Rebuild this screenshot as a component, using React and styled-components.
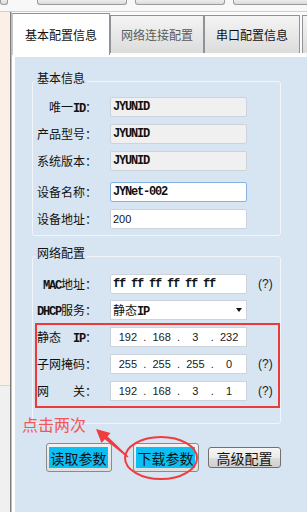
import React from 'react';
import styled, { createGlobalStyle } from 'styled-components';

const Global = createGlobalStyle`
  *, *::before, *::after { box-sizing: border-box; }
  html, body { margin: 0; padding: 0; background: #fff; }
  body { width: 307px; height: 512px; overflow: hidden; font-family: "Noto Sans CJK SC", sans-serif; }
`;

const CJK = '"Noto Sans CJK SC", "Liberation Sans", sans-serif';
const MONO = '"Liberation Mono", "DejaVu Sans Mono", monospace';

const Page = styled.div`
  position: relative;
  width: 307px;
  height: 512px;
  overflow: hidden;
  display: flex;
  flex-direction: column;
  background: #f7f7f7;
`;

const TopStrip = styled.div`
  flex: none;
  height: 12px;
  display: flex;
  align-items: flex-start;
  border-bottom: 1px solid #cfcfcf;
  background: #f8f8f8;
`;

const StubButton = styled.div`
  flex: none;
  width: ${p => p.$w}px;
  height: 5px;
  margin-left: ${p => p.$ml || 0}px;
  border: 1px solid #9c9c9c;
  border-top: none;
  border-radius: 0 0 3px 3px;
  background: linear-gradient(#ededed, #dadada);
`;

const Body = styled.div`
  flex: 1;
  display: flex;
  min-height: 0;
`;

const SideStrip = styled.div`
  flex: none;
  width: 10px;
  display: flex;
  flex-direction: column;
`;

const SideTop = styled.div`
  flex: 1;
  background: #fbf0e5;
`;

const SideBottom = styled.div`
  flex: none;
  height: 127px;
  background: #f0f0f0;
  border-top: 1px solid #d6d6d6;
`;

const SideLine = styled.div`
  flex: none;
  width: 2px;
  border-left: 1px solid #7e7e7e;
  background: #bdbdbd;
`;

const TabControl = styled.div`
  flex: 1;
  display: flex;
  flex-direction: column;
  background: #fbfbfb;
  min-width: 0;
`;

const TabBar = styled.div`
  flex: none;
  height: 43px;
  display: flex;
  align-items: flex-end;
`;

const Tab = styled.div`
  flex: none;
  width: ${p => p.$w}px;
  height: ${p => (p.$active ? 42 : 38)}px;
  margin-bottom: ${p => (p.$active ? 0 : 2)}px;
  margin-left: ${p => p.$ml || 0}px;
  border: 1px solid #8f9297;
  border-bottom: none;
  border-left-color: ${p => (p.$active ? '#c9c9c9' : '#8f9297')};
  background: ${p => (p.$active ? '#ffffff' : 'linear-gradient(#f4f4f4, #dcdcdc)')};
  display: flex;
  align-items: center;
  justify-content: center;
  font: 12px/14px ${CJK};
  color: ${p => p.$color || '#111'};
  white-space: nowrap;
  overflow: hidden;
`;

const TabPage = styled.div`
  flex: 1;
  display: flex;
  flex-direction: column;
  align-items: flex-start;
  background: #d7e4f2;
  border-top: 2px solid #ffffff;
  border-left: 3px solid #ffffff;
  padding-left: 17px;
`;

const Group = styled.fieldset`
  margin: ${p => p.$mt}px 0 0 0;
  width: 249px;
  min-inline-size: 0;
  padding: ${p => p.$pt}px 0 ${p => p.$pb}px 0;
  border: 1px solid #f2f6fb;
  border-radius: 3px;
  display: flex;
  flex-direction: column;
  gap: ${p => p.$gap}px;
`;

const Legend = styled.legend`
  margin-left: 2px;
  padding: 0 2px 6px;
  font: 12px/12px ${CJK};
  color: #111;
`;

const Row = styled.div`
  display: flex;
  align-items: center;
  height: 20px;
  margin-top: ${p => p.$mt || 0}px;
`;

const Label = styled.div`
  flex: none;
  width: ${p => p.$w || 64}px;
  display: flex;
  justify-content: ${p => (p.$split ? 'space-between' : 'flex-end')};
  align-items: baseline;
  font: 12px/20px ${CJK};
  color: #111;
  white-space: pre;
`;

const Latin = styled.span`
  font: bold 12px ${MONO};
  letter-spacing: -1.2px;
`;

const Field = styled.input`
  flex: none;
  margin: 0 0 0 13px;
  width: 137px;
  height: 20px;
  padding: 0 0 0 2px;
  border: 1px solid ${p => (p.$focus ? '#84b2e2' : '#ccd3db')};
  border-radius: 2px;
  background: ${p => (p.readOnly ? '#f0f0f0' : '#ffffff')};
  color: #111;
  font: ${p => (p.$sans ? '11px "Liberation Sans", sans-serif' : `bold 12px ${MONO}`)};
  letter-spacing: ${p => (p.$sans ? 0 : -1.2)}px;
  outline: none;
`;

const Select = styled.div`
  flex: none;
  margin-left: 13px;
  width: 137px;
  height: 20px;
  padding: 0 4px 0 2px;
  border: 1px solid #ccd3db;
  background: #ffffff;
  display: flex;
  align-items: center;
  justify-content: space-between;
  font: 12px/18px ${CJK};
  color: #111;
`;

const Caret = styled.span`
  width: 0;
  height: 0;
  border-left: 3.5px solid transparent;
  border-right: 3.5px solid transparent;
  border-top: 4px solid #111;
`;

const IpBox = styled.div`
  flex: none;
  margin-left: 13px;
  width: 137px;
  height: 20px;
  border: 1px solid #ccd3db;
  background: #ffffff;
  display: grid;
  grid-template-columns: 1fr 0 1fr 0 1fr 0 1fr;
  align-items: center;
  font: 11px/18px "Liberation Sans", sans-serif;
  color: #1a1a1a;
`;

const IpPart = styled.span`
  text-align: center;
`;

const IpDot = styled.span`
  display: flex;
  justify-content: center;
  overflow: visible;
  font-size: 11px;
`;

const Hint = styled.span`
  margin-left: 11px;
  font: 12px/20px "Liberation Sans", sans-serif;
  color: #222;
  white-space: nowrap;
`;

const RedBox = styled.div`
  margin: ${p => p.$mt || 0}px 0 0 2px;
  width: 245px;
  border: 2px solid #ec3a3a;
  padding: 2px 0 5px 0;
  display: flex;
  flex-direction: column;
  gap: 7px;
`;

const ButtonRow = styled.div`
  margin: 19px 0 0 14px;
  display: flex;
  align-items: center;
`;

const HiButton = styled.div`
  flex: none;
  margin-left: ${p => p.$ml || 0}px;
  width: 66px;
  height: 29px;
  padding: 3px 3px 3px 2px;
  border: 1px solid #8a8a8a;
  border-radius: 3px;
  background: linear-gradient(#f2f2f2, #dedede);
`;

const HiFace = styled.div`
  width: 100%;
  height: 100%;
  background: #0bbff2;
  display: flex;
  align-items: center;
  justify-content: center;
  font: 14px/16px ${CJK};
  color: #111;
`;

const PlainButton = styled.div`
  flex: none;
  margin-left: ${p => p.$ml || 0}px;
  width: 73px;
  height: 21px;
  border: 1px solid #707070;
  border-radius: 3px;
  background: linear-gradient(#f6f6f6 0%, #ebebeb 50%, #dddddd 51%, #cfcfcf 100%);
  display: flex;
  align-items: center;
  justify-content: center;
  font: 14px/16px ${CJK};
  color: #111;
`;

const Note = styled.div`
  position: absolute;
  left: 22px;
  top: 416px;
  font: 16px/16px ${CJK};
  color: #f25656;
  white-space: nowrap;
`;

const Overlay = styled.svg`
  position: absolute;
  left: 0;
  top: 0;
  pointer-events: none;
`;

function Ip({ parts }) {
  return (
    <IpBox>
      <IpPart>{parts[0]}</IpPart>
      <IpDot>.</IpDot>
      <IpPart>{parts[1]}</IpPart>
      <IpDot>.</IpDot>
      <IpPart>{parts[2]}</IpPart>
      <IpDot>.</IpDot>
      <IpPart>{parts[3]}</IpPart>
    </IpBox>
  );
}

export default function App() {
  return (
    <Page>
      <Global />
      <TopStrip>
        <StubButton $w={8} />
        <StubButton $w={90} $ml={29} />
        <StubButton $w={90} $ml={8} />
        <StubButton $w={90} $ml={8} />
      </TopStrip>
      <Body>
        <SideStrip>
          <SideTop />
          <SideBottom />
        </SideStrip>
        <SideLine />
        <TabControl>
          <TabBar>
            <Tab $w={98} $active>基本配置信息</Tab>
            <Tab $w={94} $color="#5a5a5a">网络连接配置</Tab>
            <Tab $w={96}>串口配置信息</Tab>
            <Tab $w={20} $ml={2} />
          </TabBar>
          <TabPage>
            <Group $mt={15} $pt={7} $pb={6} $gap={7}>
              <Legend>基本信息</Legend>
              <Row>
                <Label>唯一<Latin>ID</Latin>：</Label>
                <Field readOnly defaultValue="JYUNID" />
              </Row>
              <Row>
                <Label>产品型号：</Label>
                <Field readOnly defaultValue="JYUNID" />
              </Row>
              <Row>
                <Label>系统版本：</Label>
                <Field readOnly defaultValue="JYUNID" />
              </Row>
              <Row $mt={4}>
                <Label>设备名称：</Label>
                <Field $focus defaultValue="JYNet-002" />
              </Row>
              <Row>
                <Label>设备地址：</Label>
                <Field $sans defaultValue="200" />
              </Row>
            </Group>
            <Group $mt={11} $pt={9} $pb={15} $gap={6}>
              <Legend>网络配置</Legend>
              <Row>
                <Label><Latin>MAC</Latin>地址：</Label>
                <Field defaultValue="ff ff ff ff ff ff" />
                <Hint>(?)</Hint>
              </Row>
              <Row>
                <Label><Latin>DHCP</Latin>服务：</Label>
                <Select>
                  <span>静态<Latin>IP</Latin></span>
                  <Caret />
                </Select>
              </Row>
              <RedBox $mt={-3}>
                <Row>
                  <Label $w={60} $split>
                    <span>静态</span>
                    <span><Latin>IP</Latin>：</span>
                  </Label>
                  <Ip parts={['192', '168', '3', '232']} />
                </Row>
                <Row>
                  <Label $w={60}>子网掩码：</Label>
                  <Ip parts={['255', '255', '255', '0']} />
                  <Hint>(?)</Hint>
                </Row>
                <Row>
                  <Label $w={60} $split>
                    <span>网</span>
                    <span>关：</span>
                  </Label>
                  <Ip parts={['192', '168', '3', '1']} />
                  <Hint>(?)</Hint>
                </Row>
              </RedBox>
            </Group>
            <ButtonRow>
              <HiButton><HiFace>读取参数</HiFace></HiButton>
              <HiButton $ml={21}><HiFace>下载参数</HiFace></HiButton>
              <PlainButton $ml={9}>高级配置</PlainButton>
            </ButtonRow>
          </TabPage>
        </TabControl>
      </Body>
      <Note>点击两次</Note>
      <Overlay width="307" height="512" viewBox="0 0 307 512">
        <polygon
          points="128.5,456.4 127.2,457.6 104.5,439.1 107.1,436.1"
          fill="#f03c3c"
        />
        <polygon points="96,429 110.5,433 101.5,443" fill="#f03c3c" />
        <ellipse cx="161" cy="458" rx="36" ry="21" fill="none" stroke="#f03c3c" strokeWidth="2" />
      </Overlay>
    </Page>
  );
}
